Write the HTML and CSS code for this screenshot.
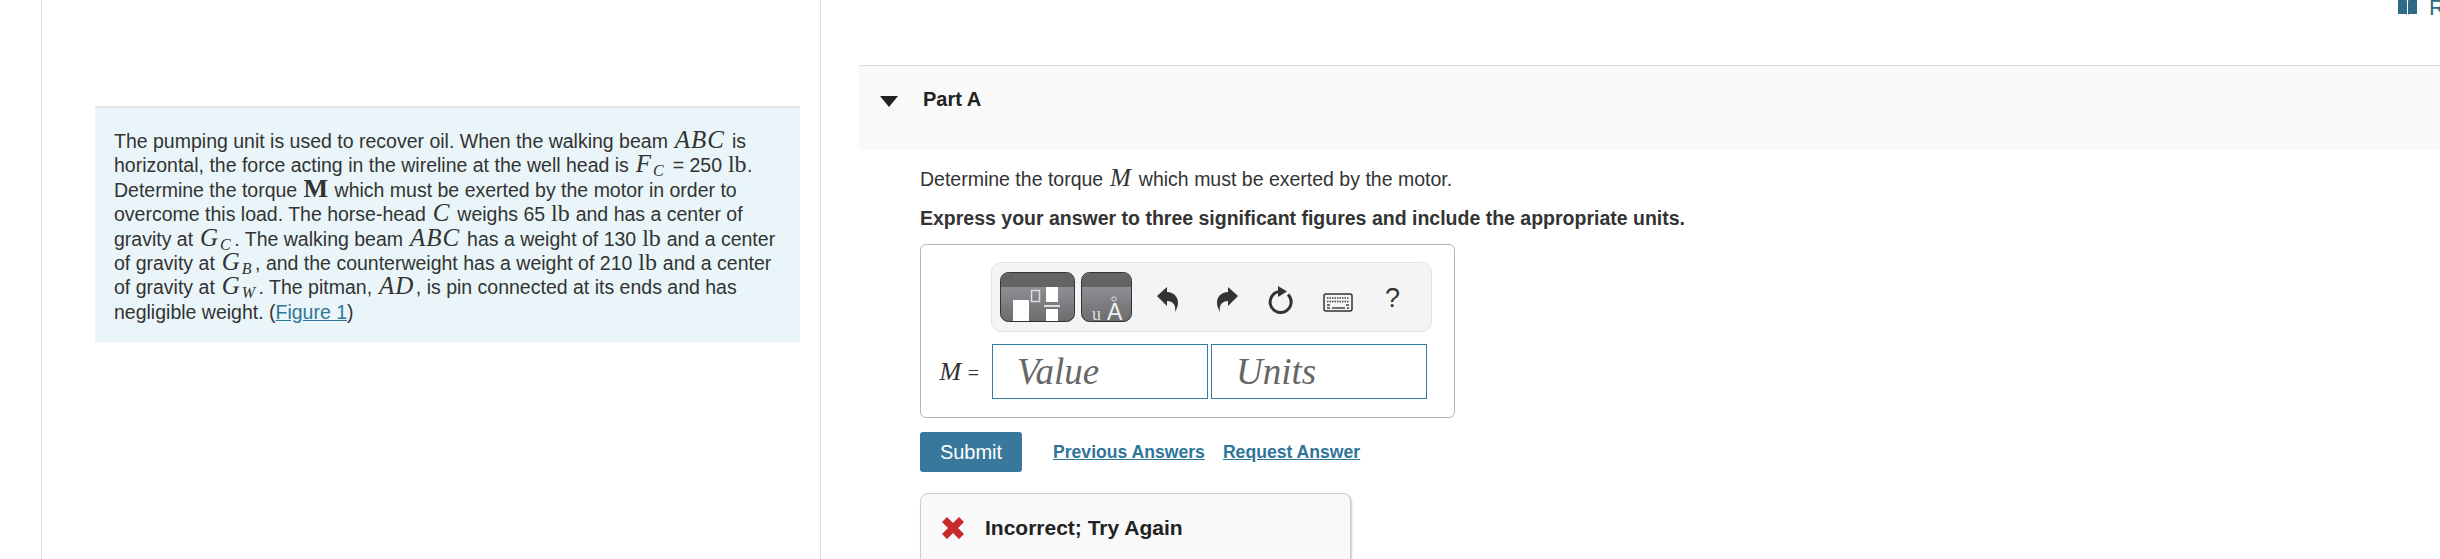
FILE: index.html
```html
<!DOCTYPE html>
<html lang="en">
<head>
<meta charset="utf-8">
<title>Part A</title>
<link rel="stylesheet" href="styles.css">
</head>
<body>
<div class="page">
  <div class="gutter"></div>
  <section class="problem">
    <div class="statement">
      The pumping unit is used to recover oil. When the walking beam <i class="m">ABC</i> is<br>
      horizontal, the force acting in the wireline at the well head is <i class="m">F<sub>C</sub></i> = 250 <span class="u">lb</span>.<br>
      Determine the torque <b class="mb">M</b> which must be exerted by the motor in order to<br>
      overcome this load. The horse-head <i class="m">C</i> weighs 65 <span class="u">lb</span> and has a center of<br>
      gravity at <i class="m">G<sub>C</sub></i>. The walking beam <i class="m">ABC</i> has a weight of 130 <span class="u">lb</span> and a center<br>
      of gravity at <i class="m">G<sub>B</sub></i>, and the counterweight has a weight of 210 <span class="u">lb</span> and a center<br>
      of gravity at <i class="m">G<sub>W</sub></i>. The pitman, <i class="m">AD</i>, is pin connected at its ends and has<br>
      negligible weight. (<a href="#" class="link">Figure 1</a>)
    </div>
  </section>
  <section class="work">
    <div class="review">
      <svg class="book" viewBox="0 0 19 15"><path d="M0 0h8.500l.5 1v14l-1-1H0zM19 0h-8.500l-.5 1v14l1-1h8z" fill="#2f6b85"/></svg>
      <a href="#" class="link review-link">&nbsp;Review</a>
    </div>
    <div class="part-head">
      <svg class="caret" viewBox="0 0 18 11"><path d="M0 0h18L9 11z" fill="#222"/></svg>
      <h2>Part A</h2>
    </div>
    <div class="part-body">
      <p class="prompt">Determine the torque <i class="m">M</i> which must be exerted by the motor.</p>
      <p class="instr">Express your answer to three significant figures and include the appropriate units.</p>
      <div class="answer">
        <div class="toolbar">
          <svg class="tb-btn" width="75" height="50" viewBox="0 0 75 50">
            <defs><linearGradient id="g1" x1="0" y1="0" x2="0" y2="1"><stop offset="0" stop-color="#9c9ca4"/><stop offset="1" stop-color="#6c6c6e"/></linearGradient></defs>
            <rect x=".5" y=".5" width="74" height="49" rx="8" fill="url(#g1)" stroke="#333"/>
            <path d="M1 15V8.500A7.500 7.500 0 0 1 8.500 1h58A7.500 7.500 0 0 1 74 8.500V15z" fill="#646464"/>
            <rect x="13" y="28" width="16" height="21" fill="#fff"/>
            <rect x="31.500" y="18.500" width="8" height="11" fill="none" stroke="#ddd" stroke-width="1.500"/>
            <rect x="46" y="15" width="12" height="15" fill="#fff"/>
            <rect x="44" y="33" width="16" height="2" fill="#ddd"/>
            <rect x="46" y="37" width="12" height="12" fill="#fff"/>
          </svg>
          <svg class="tb-btn tb-btn2" width="51" height="50" viewBox="0 0 51 50">
            <rect x=".5" y=".5" width="50" height="49" rx="8" fill="url(#g1)" stroke="#333"/>
            <path d="M1 15V8.500A7.500 7.500 0 0 1 8.500 1h34A7.500 7.500 0 0 1 50 8.500V15z" fill="#646464"/>
            <text x="11" y="48" class="tb-mu">u</text>
            <text x="26" y="48" class="tb-a">A</text>
            <circle cx="33" cy="27" r="2.200" fill="none" stroke="#ddd" stroke-width="1"/>
          </svg>
          <svg class="ico undo" width="21" height="25" viewBox="0 0 21 25"><path d="M0 9 10 0v5c7 0 11 5 11 11 0 4-2 7-3 9 1-6-1-11-8-11v5z" fill="#333"/></svg>
          <svg class="ico redo" width="21" height="25" viewBox="0 0 21 25"><path d="M21 9 11 0v5C4 5 0 10 0 16c0 4 2 7 3 9-1-6 1-11 8-11v5z" fill="#333"/></svg>
          <svg class="ico reload" width="25" height="28" viewBox="0 0 25 28"><path d="M12 5.500A10.500 10.500 0 1 0 20 8.500" fill="none" stroke="#333" stroke-width="3"/><path d="M10 0l9 5.500L10 11z" fill="#333"/></svg>
          <svg class="ico kbd" width="30" height="19" viewBox="0 0 30 19"><rect x="1" y="1" width="28" height="17" rx="2" fill="#f4f4f4" stroke="#333" stroke-width="1.500"/><path d="M4 5h22M4 8.500h22" stroke="#444" stroke-width="1.500" stroke-dasharray="1.500 1"/><path d="M4 12h3M23 12h3M4 15h3M9 15h13M24 15h2" stroke="#444" stroke-width="1.500"/></svg>
          <span class="help">?</span>
        </div>
        <div class="inputs">
          <span class="lbl"><i>M</i> <span class="eq">=</span></span>
          <div class="field"><span>Value</span></div>
          <div class="field"><span>Units</span></div>
        </div>
      </div>
      <div class="actions">
        <button class="submit">Submit</button>
        <a href="#" class="link act">Previous Answers</a>
        <a href="#" class="link act">Request Answer</a>
      </div>
      <div class="feedback">
        <svg class="x" viewBox="0 0 22 22"><path d="M5 0l6 6 6-6 5 5-6 6 6 6-5 5-6-6-6 6-5-5 6-6-6-6z" fill="#c9282d"/></svg>
        <strong>Incorrect; Try Again</strong>
      </div>
    </div>
  </section>
</div>
</body>
</html>
```
FILE: styles.css
```css
* { box-sizing: border-box; }
html, body { margin: 0; height: 559px; overflow: hidden; background: #fff; }
body { font-family: "Liberation Sans", Arial, sans-serif; color: #333; font-size: 19.500px; }
.page { display: flex; height: 559px; overflow: hidden; }
.gutter { width: 42px; flex: none; border-right: 1px solid #ddd; }
.problem { width: 779px; flex: none; border-right: 1px solid #ddd; padding: 106px 20px 0 53px; }
.statement { background: #e9f5f8; border-top: 2px solid #e2e6e8; width: 705px; height: 236px; padding: 21px 19px 0; line-height: 24.400px; white-space: nowrap; }
.m { font-family: "Liberation Serif", serif; font-style: italic; font-size: 25px; letter-spacing: 1px; margin: 0 1.500px; line-height: 0; }
.m sub { font-size: 16px; line-height: 0; vertical-align: -4px; margin-left: 1px; padding-right: 2px; letter-spacing: 0; }
.mb { font-family: "Liberation Serif", serif; font-size: 26px; margin: 0 1px; line-height: 0; }
.u { font-family: "Liberation Serif", serif; font-size: 24px; margin: 0 .5px; line-height: 0; }
.link { color: #2e7599; text-decoration: underline; }
.work { flex: 1; min-width: 0; padding-left: 38px; }
.review { height: 16px; display: flex; align-items: flex-end; padding-left: 1539px; gap: 6px; overflow: hidden; white-space: nowrap; }
.book { width: 19px; height: 15px; flex: none; align-self: flex-start; }
.review-link { color: #2f6b85; font-size: 22px; line-height: 16px; }
.part-head { margin-top: 49px; height: 85px; background: #f9f9f9; border-top: 1px solid #ddd; display: flex; align-items: flex-start; padding: 21px 0 0 21px; }
.caret { width: 18px; height: 11px; margin-top: 9px; flex: none; }
.part-head h2 { margin: 0 0 0 25px; font-size: 20px; line-height: 24px; color: #222; }
.part-body { padding: 0 0 0 61px; }
.prompt { margin: 17px 0 0; line-height: 24px; }
.instr { margin: 15px 0 0; font-weight: 700; line-height: 24px; }
.answer { margin-top: 14px; width: 535px; height: 174px; border: 1px solid #b5b5b5; border-radius: 6px; padding: 17px 0 0 70px; }
.toolbar { width: 441px; height: 70px; background: #f4f4f4; border: 1px solid #e4e4e4; border-radius: 10px; display: flex; align-items: center; padding-left: 8px; }
.tb-btn { overflow: visible; }
.tb-btn2 { margin-left: 6px; }
.tb-mu { font-family: "Liberation Serif", serif; font-size: 18px; fill: #ddd; }
.tb-a { font-family: "Liberation Sans", sans-serif; font-size: 23px; fill: #eee; }
.ico { margin-top: 5px; }
.undo { margin-left: 25px; }
.redo { margin-left: 39px; }
.reload { margin-left: 30px; }
.kbd { margin-left: 30px; margin-top: 10px; }
.help { margin-left: 32px; font-size: 27px; color: #333; margin-top: 3px; }
.inputs { display: flex; align-items: center; margin-top: 12px; margin-left: -70px; }
.lbl { width: 71px; text-align: right; padding-right: 13px; font-family: "Liberation Serif", serif; font-size: 26px; white-space: nowrap; }
.eq { font-size: 20px; }
.field { width: 216px; height: 55px; border: 1px solid #2f7a9e; margin-right: 3px; display: flex; align-items: center; padding-left: 24px; font-family: "Liberation Serif", serif; font-style: italic; font-size: 37px; color: #666; }
.actions { display: flex; align-items: center; margin-top: 14px; }
.submit { width: 102px; height: 40px; background: #38789c; color: #fff; border: 0; border-radius: 3px; font: 20px "Liberation Sans", sans-serif; padding: 0; }
.act { font-weight: 700; font-size: 17.600px; margin-left: 18px; }
.act:first-of-type { margin-left: 31px; }
.feedback { margin-top: 21px; width: 431px; height: 90px; background: #f9f9f9; border: 1px solid #ccc; border-radius: 8px; box-shadow: 1px 1px 2px #ccc; display: flex; align-items: flex-start; padding: 23px 0 0 21px; }
.x { width: 22px; height: 22px; flex: none; }
.feedback strong { margin-left: 21px; font-size: 21px; line-height: 22px; color: #222; }
```
